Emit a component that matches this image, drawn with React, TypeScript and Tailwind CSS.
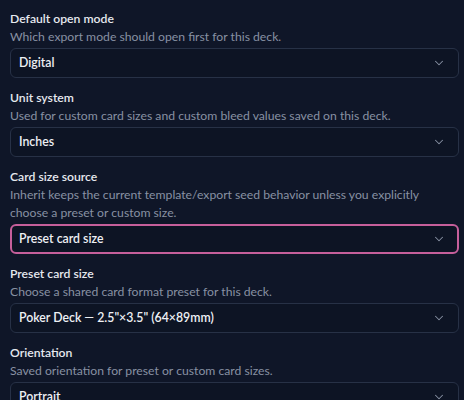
import { ChevronDown } from "lucide-react";
import type { ReactNode } from "react";

type Field = {
  label: string;
  hint: ReactNode;
  value: string;
  focused?: boolean;
};

const fields: Field[] = [
  {
    label: "Default open mode",
    hint: "Which export mode should open first for this deck.",
    value: "Digital",
  },
  {
    label: "Unit system",
    hint: "Used for custom card sizes and custom bleed values saved on this deck.",
    value: "Inches",
  },
  {
    label: "Card size source",
    hint: (
      <>
        <span className="whitespace-nowrap">
          Inherit keeps the current template/export seed behavior unless you explicitly
        </span>{" "}
        choose a preset or custom size.
      </>
    ),
    value: "Preset card size",
    focused: true,
  },
  {
    label: "Preset card size",
    hint: "Choose a shared card format preset for this deck.",
    value: "Poker Deck \u2014 2.5\"\u00d73.5\" (64\u00d789mm)",
  },
  {
    label: "Orientation",
    hint: "Saved orientation for preset or custom card sizes.",
    value: "Portrait",
  },
];

function SelectField({ field }: { field: Field }) {
  return (
    <div className="flex flex-col">
      <label className="text-[12.2px] font-semibold leading-[18px] text-[#e6e9ef]">
        {field.label}
      </label>
      <p className="text-[12.2px] leading-[18px] text-[#8891a3]">{field.hint}</p>
      <button
        className={
          field.focused
            ? "mt-[2px] flex h-[30px] w-full items-center justify-between rounded-md border-2 border-[#c65f9b] bg-[#0d1424] pl-[7px] pr-[11px] text-left"
            : "mt-[2px] flex h-[30px] w-full items-center justify-between rounded-md border border-[#273146] bg-[#0d1424] pl-2 pr-[12px] text-left"
        }
      >
        <span className="text-[12.3px] font-semibold text-[#eef0f4]">{field.value}</span>
        <ChevronDown className="h-3.5 w-3.5 text-[#8891a3]" strokeWidth={1.75} />
      </button>
    </div>
  );
}

export default function App() {
  return (
    <div
      className="h-[400px] w-[464px] overflow-hidden bg-[#0f1628] pl-[10px] pr-[5px] pt-[10px]"
      style={{ fontFamily: "Lato, 'Noto Sans', sans-serif" }}
    >
      <div className="flex flex-col gap-[11px]">
        {fields.map((f) => (
          <SelectField key={f.label} field={f} />
        ))}
      </div>
    </div>
  );
}
